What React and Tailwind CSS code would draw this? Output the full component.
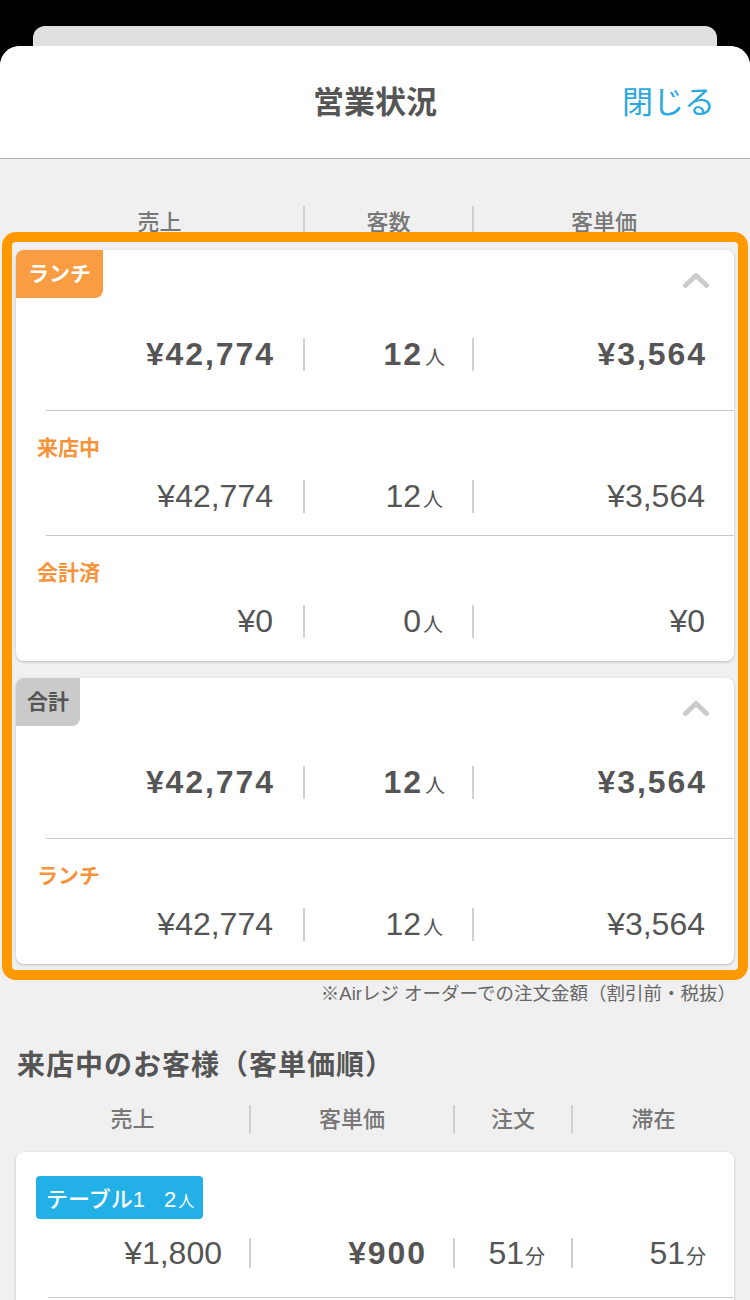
import React from 'react';

const Chevron = () => (
  <svg width="28" height="17" viewBox="0 0 28 17" className="mt-[22px] mr-[24px] shrink-0">
    <polyline
      points="3.5,13.5 14,3.5 24.5,13.5"
      fill="none"
      stroke="#cccccc"
      strokeWidth="5"
      strokeLinecap="round"
      strokeLinejoin="round"
    />
  </svg>
);

const Div = ({ h = 'h-[33px]' }) => <div className={`w-[2px] ${h} bg-[#d0d0d0] shrink-0`} />;

// three column value row used in the summary cards
const SummaryRow = ({ yen, count, avg, bold, height }) => {
  const num = bold
    ? 'text-[32px] font-bold tracking-[0.06em] leading-none text-[#555555]'
    : 'text-[32px] font-normal leading-none text-[#555555]';
  return (
    <div className={`flex items-center ${height}`}>
      <div className={`w-[287px] text-right ${bold ? 'pr-[28px]' : 'pr-[30px]'} ${num}`}>{yen}</div>
      <Div />
      <div className={`w-[167px] text-right ${bold ? 'pr-[27px]' : 'pr-[29px]'} ${num}`}>
        {count}
        <span className="text-[20px] font-normal tracking-normal ml-[2px]">人</span>
      </div>
      <Div />
      <div className={`flex-1 text-right ${bold ? 'pr-[27px]' : 'pr-[29px]'} ${num}`}>{avg}</div>
    </div>
  );
};

const SubSection = ({ label, yen, count, avg, last }) => (
  <div className={`pt-[23px] ${last ? 'pb-[20px]' : 'pb-[19px]'}`}>
    <div className="pl-[21px] h-[28px] flex items-center text-[21px] font-bold text-[#f7933b]">{label}</div>
    <div className="mt-[14px]">
      <SummaryRow yen={yen} count={count} avg={avg} height="h-[40px]" />
    </div>
  </div>
);

const Line = ({ ml = 'ml-[30px]' }) => <div className={`${ml} h-px bg-[#c8c8c8]`} />;

const Card = ({ children }) => (
  <div className="mx-[16px] bg-white rounded-[8px] shadow-[0_1px_3px_rgba(0,0,0,0.22)] overflow-hidden">
    {children}
  </div>
);

const App = () => {
  return (
    <div className="min-h-[1300px] bg-black font-['Liberation_Sans','Noto_Sans_CJK_JP',sans-serif]">
      {/* stacked sheet behind */}
      <div className="pt-[26px]">
        <div className="mx-[33px] h-[20px] bg-[#e0e0e0] rounded-t-[12px]" />
      </div>

      <div className="bg-[#f0f0f0] rounded-t-[20px] overflow-hidden min-h-[1254px]">
        {/* header */}
        <div className="bg-white h-[113px] border-b border-[#b3b3b3] grid grid-cols-[1fr_auto_1fr] items-center">
          <div />
          <h1 className="text-[31px] font-bold text-[#555555] leading-none">営業状況</h1>
          <div className="justify-self-end pr-[35px] text-[31px] text-[#2aa9e0] leading-none">閉じる</div>
        </div>

        {/* summary block */}
        <div className="pt-[47px]">
          <div className="relative">
            <div className="mx-[16px] h-[32px] flex items-center text-[22px] font-medium text-[#777777]">
              <div className="w-[287px] text-center">売上</div>
              <Div h="h-[32px]" />
              <div className="w-[167px] text-center">客数</div>
              <Div h="h-[32px]" />
              <div className="flex-1 text-center">客単価</div>
            </div>

            <div className="mt-[12px]">
              <Card>
                <div className="flex justify-between items-start">
                  <div className="h-[48px] px-[12px] flex items-center bg-[#f99c42] rounded-br-[8px] text-white text-[21px] font-bold">
                    ランチ
                  </div>
                  <Chevron />
                </div>
                <SummaryRow yen="¥42,774" count="12" avg="¥3,564" bold height="h-[112px]" />
                <Line />
                <SubSection label="来店中" yen="¥42,774" count="12" avg="¥3,564" />
                <Line />
                <SubSection label="会計済" yen="¥0" count="0" avg="¥0" last />
              </Card>
            </div>

            <div className="mt-[17px]">
              <Card>
                <div className="flex justify-between items-start">
                  <div className="h-[48px] px-[11px] flex items-center bg-[#cacaca] rounded-br-[8px] text-[#555555] text-[21px] font-bold">
                    合計
                  </div>
                  <Chevron />
                </div>
                <SummaryRow yen="¥42,774" count="12" avg="¥3,564" bold height="h-[112px]" />
                <Line />
                <SubSection label="ランチ" yen="¥42,774" count="12" avg="¥3,564" last />
              </Card>
            </div>

            {/* highlight frame */}
            <div className="absolute top-[26px] left-[2px] right-[2px] -bottom-[16px] border-[10px] border-[#ff9900] rounded-[14px] pointer-events-none" />
          </div>

          <div className="mt-[18px] pr-[14px] text-right text-[18.5px] leading-[24px] text-[#666666]">
            ※Airレジ オーダーでの注文金額（割引前・税抜）
          </div>

          <h2 className="mt-[43px] pl-[17px] text-[28px] tracking-[1px] leading-[34px] font-bold text-[#555555]">
            来店中のお客様（客単価順）
          </h2>

          <div className="mt-[22px] mx-[16px] h-[28px] flex items-center text-[22px] font-medium text-[#777777]">
            <div className="w-[233px] text-center">売上</div>
            <Div h="h-[28px]" />
            <div className="w-[202px] text-center">客単価</div>
            <Div h="h-[28px]" />
            <div className="w-[116px] text-center">注文</div>
            <Div h="h-[28px]" />
            <div className="flex-1 text-center">滞在</div>
          </div>

          <div className="mt-[19px]">
            <Card>
              <div className="pt-[24px] pl-[20px]">
                <div className="inline-flex items-baseline h-[43px] pt-[7px] pl-[10px] pr-[9px] bg-[#22b0e6] rounded-[4px] text-white font-medium">
                  <span className="text-[22px]">テーブル1</span>
                  <span className="text-[22px] ml-[19px]">2</span>
                  <span className="text-[16px] font-normal ml-[2px]">人</span>
                </div>
              </div>
              <div className="mt-[14px] h-[40px] flex items-center text-[32px] leading-none text-[#555555]">
                <div className="w-[233px] pr-[27px] text-right">¥1,800</div>
                <Div h="h-[30px]" />
                <div className="w-[202px] pr-[26px] text-right font-bold tracking-[0.06em]">¥900</div>
                <Div h="h-[30px]" />
                <div className="w-[116px] pr-[26px] text-right">
                  51<span className="text-[20px] ml-[1px]">分</span>
                </div>
                <Div h="h-[30px]" />
                <div className="flex-1 pr-[28px] text-right">
                  51<span className="text-[20px] ml-[1px]">分</span>
                </div>
              </div>
              <div className="h-[24px]" />
              <Line ml="ml-[32px]" />
              <div className="h-[120px]" />
            </Card>
          </div>
        </div>
      </div>
    </div>
  );
};

export default App;
